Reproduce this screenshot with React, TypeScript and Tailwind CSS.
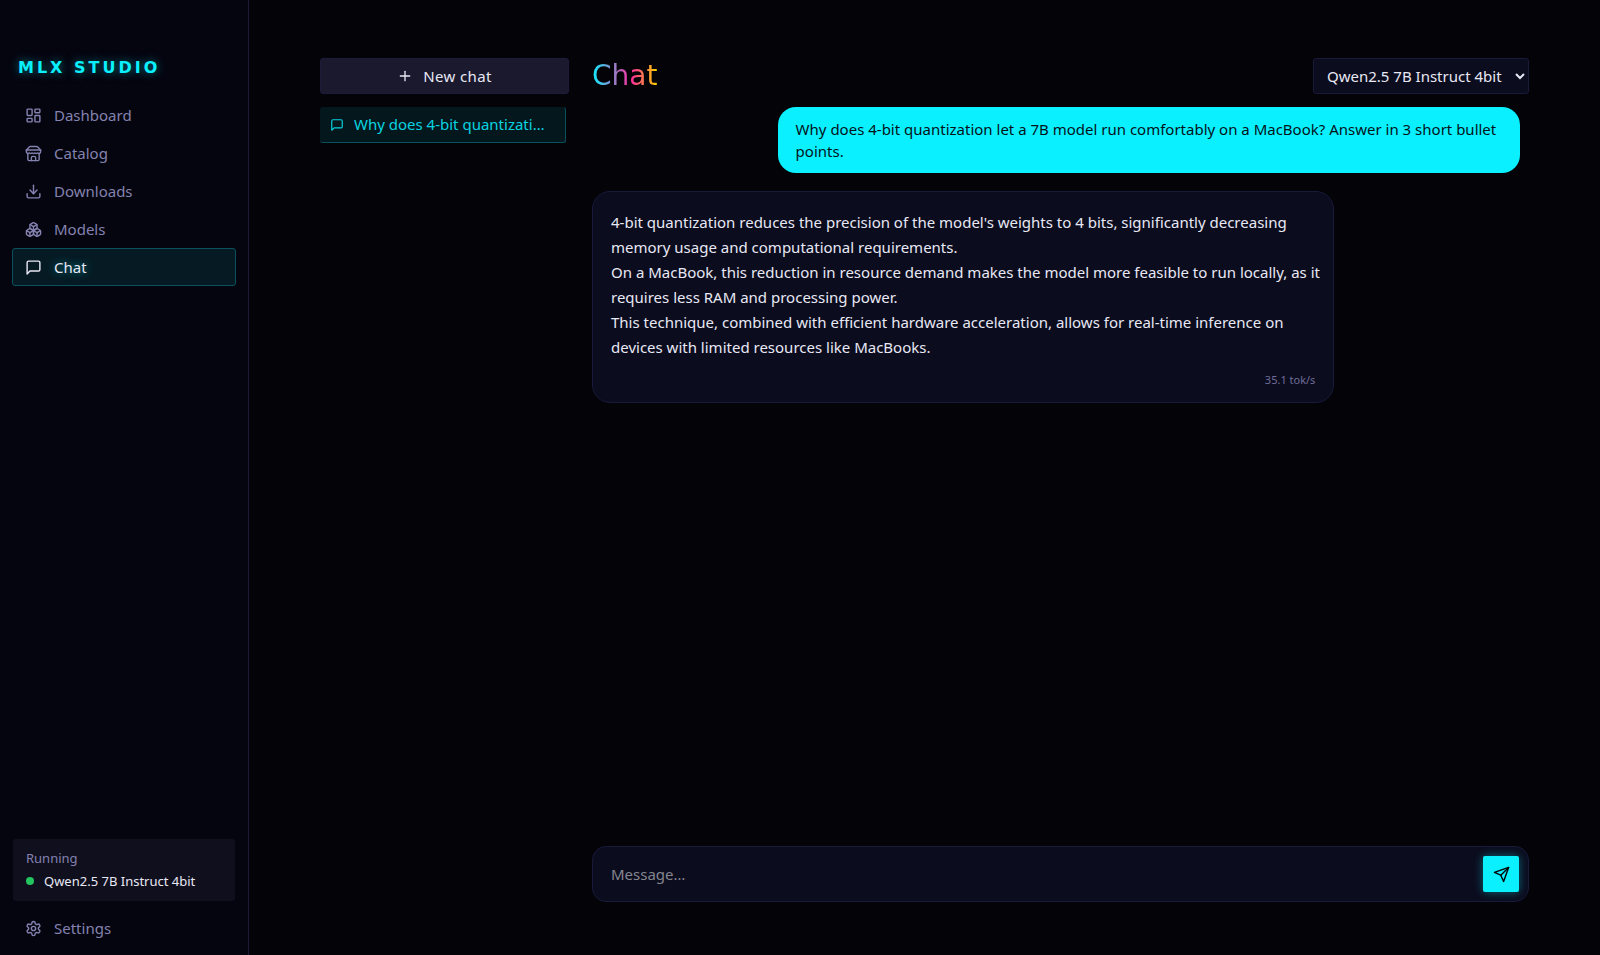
import { useState } from "react";
import type { ReactNode } from "react";
import { Boxes, Download, LayoutDashboard, Plus } from "lucide-react";

type IconProps = { size?: number; className?: string };
type Icon = (props: IconProps) => ReactNode;

function Glyph({ size = 17, className, children }: IconProps & { children: ReactNode }) {
  return (
    <svg
      aria-hidden="true"
      width={size}
      height={size}
      viewBox="0 0 24 24"
      fill="none"
      stroke="currentColor"
      strokeWidth={2}
      strokeLinecap="round"
      strokeLinejoin="round"
      className={className}
    >
      {children}
    </svg>
  );
}

const StoreIcon: Icon = (props) => (
  <Glyph {...props}>
    <path d="m2 7 4.41-4.41A2 2 0 0 1 7.83 2h8.34a2 2 0 0 1 1.42.59L22 7" />
    <path d="M4 12v8a2 2 0 0 0 2 2h12a2 2 0 0 0 2-2v-8" />
    <path d="M15 22v-4a2 2 0 0 0-2-2h-2a2 2 0 0 0-2 2v4" />
    <path d="M2 7h20" />
    <path d="M22 7v3a2 2 0 0 1-2 2a2.7 2.7 0 0 1-1.59-.63.7.7 0 0 0-.82 0A2.7 2.7 0 0 1 16 12a2.7 2.7 0 0 1-1.59-.63.7.7 0 0 0-.82 0A2.7 2.7 0 0 1 12 12a2.7 2.7 0 0 1-1.59-.63.7.7 0 0 0-.82 0A2.7 2.7 0 0 1 8 12a2.7 2.7 0 0 1-1.59-.63.7.7 0 0 0-.82 0A2.7 2.7 0 0 1 4 12a2 2 0 0 1-2-2V7" />
  </Glyph>
);

const MessageIcon: Icon = (props) => (
  <Glyph {...props}>
    <path d="M21 15a2 2 0 0 1-2 2H7l-4 4V5a2 2 0 0 1 2-2h14a2 2 0 0 1 2 2z" />
  </Glyph>
);

const SendIcon: Icon = (props) => (
  <Glyph {...props}>
    <path d="m22 2-7 20-4-9-9-4Z" />
    <path d="M22 2 11 13" />
  </Glyph>
);

const SettingsIcon: Icon = (props) => (
  <Glyph {...props}>
    <path d="M12.22 2h-.44a2 2 0 0 0-2 2v.18a2 2 0 0 1-1 1.73l-.43.25a2 2 0 0 1-2 0l-.15-.08a2 2 0 0 0-2.73.73l-.22.38a2 2 0 0 0 .73 2.73l.15.1a2 2 0 0 1 1 1.72v.51a2 2 0 0 1-1 1.74l-.15.09a2 2 0 0 0-.73 2.73l.22.38a2 2 0 0 0 2.73.73l.15-.08a2 2 0 0 1 2 0l.43.25a2 2 0 0 1 1 1.73V20a2 2 0 0 0 2 2h.44a2 2 0 0 0 2-2v-.18a2 2 0 0 1 1-1.73l.43-.25a2 2 0 0 1 2 0l.15.08a2 2 0 0 0 2.73-.73l.22-.39a2 2 0 0 0-.73-2.73l-.15-.08a2 2 0 0 1-1-1.74v-.5a2 2 0 0 1 1-1.74l.15-.09a2 2 0 0 0 .73-2.73l-.22-.38a2 2 0 0 0-2.73-.73l-.15.08a2 2 0 0 1-2 0l-.43-.25a2 2 0 0 1-1-1.73V4a2 2 0 0 0-2-2z" />
    <circle cx="12" cy="12" r="3" />
  </Glyph>
);

const NAV: { label: string; icon: ReactNode }[] = [
  { label: "Dashboard", icon: <LayoutDashboard size={17} /> },
  { label: "Catalog", icon: <StoreIcon /> },
  { label: "Downloads", icon: <Download size={17} /> },
  { label: "Models", icon: <Boxes size={17} /> },
  { label: "Chat", icon: <MessageIcon /> },
];

const ANSWER = [
  "4-bit quantization reduces the precision of the model's weights to 4 bits, significantly decreasing memory usage and computational requirements.",
  "On a MacBook, this reduction in resource demand makes the model more feasible to run locally, as it requires less RAM and processing power.",
  "This technique, combined with efficient hardware acceleration, allows for real-time inference on devices with limited resources like MacBooks.",
];

function NavLink({
  icon,
  active = false,
  children,
}: {
  icon: ReactNode;
  active?: boolean;
  children: ReactNode;
}) {
  return (
    <a
      href="#"
      aria-current={active ? "page" : undefined}
      className={
        active
          ? "flex h-[38px] items-center gap-3 rounded-[3px] border border-[#07525c] bg-[#061a23] px-3 text-[#e8e8f4] [text-shadow:0_0_10px_rgba(10,240,255,0.6)]"
          : "flex h-[38px] items-center gap-3 rounded-[3px] border border-transparent px-3 text-[#8482b0]"
      }
    >
      {icon}
      {children}
    </a>
  );
}

function Sidebar() {
  return (
    <aside className="flex w-[249px] shrink-0 flex-col border-r border-[#1a1a38] bg-[#05050f] px-3 pt-[58px] pb-2">
      <div className="mb-[18px] px-[6px] font-['DejaVu_Sans',sans-serif] text-base leading-5 font-bold tracking-[3px] text-[#0af0ff] [text-shadow:0_0_10px_rgba(10,240,255,0.5)]">
        MLX STUDIO
      </div>
      <nav className="flex flex-col">
        {NAV.map((item) => (
          <NavLink key={item.label} icon={item.icon} active={item.label === "Chat"}>
            {item.label}
          </NavLink>
        ))}
      </nav>
      <section className="mx-px mt-auto mb-2 rounded-[3px] bg-[#100f1e] px-[13px] py-2">
        <h2 className="text-[13px] leading-[22px] text-[#8482b0]">Running</h2>
        <p className="flex items-center gap-[10px] text-[13px] leading-6 text-[#e8e8f4]">
          <span className="size-2 rounded-full bg-[#22c55e]" />
          Qwen2.5 7B Instruct 4bit
        </p>
      </section>
      <NavLink icon={<SettingsIcon />}>Settings</NavLink>
    </aside>
  );
}

function History() {
  return (
    <section aria-label="Chats" className="flex w-[249px] shrink-0 flex-col gap-[13px]">
      <button
        type="button"
        className="flex h-9 items-center justify-center gap-[10px] rounded-[3px] border border-[#1c1b3c] bg-[#1a192e] tracking-wide text-[#e8e8f4]"
      >
        <Plus size={16} />
        New chat
      </button>
      <div className="pr-[3px]">
        <button
          type="button"
          className="flex h-9 w-full items-center gap-[10px] rounded-[3px] border-r border-b border-[#07525c] bg-[#04171d] pl-[10px] text-[#09d3e0]"
        >
          <MessageIcon size={14} />
          Why does 4-bit quantizati…
        </button>
      </div>
    </section>
  );
}

export default function App() {
  const [draft, setDraft] = useState("");
  return (
    <div className="flex min-h-screen bg-[#030308] font-['Noto_Sans',sans-serif] text-[15px] text-[#e8e8f4]">
      <Sidebar />
      <main className="flex min-w-0 flex-1 gap-[23px] px-[71px] pt-[58px] pb-[53px]">
        <History />
        <section className="flex min-w-0 flex-1 flex-col">
          <header className="flex h-9 items-center justify-between">
            <h1 className="bg-linear-to-r/srgb from-[#0af0ff] via-[#ff2a9d] via-60% to-[#ffd000] bg-clip-text font-['DejaVu_Sans',sans-serif] text-[28px] leading-9 text-transparent">
              Chat
            </h1>
            <select
              aria-label="Model"
              className="h-9 w-[216px] rounded-[3px] border border-[#181a3a] bg-[#0b0c1e] px-[9px] text-[#e8e8f4]"
            >
              <option>Qwen2.5 7B Instruct 4bit</option>
            </select>
          </header>
          <div className="mt-[13px] flex flex-1 flex-col gap-[18px] pr-[9px]">
            <p className="w-4/5 self-end rounded-[18px] bg-[#0af0ff] px-[18px] py-[11px] leading-[22px] text-[#04121a]">
              Why does 4-bit quantization let a 7B model run comfortably on a MacBook? Answer in 3 short
              bullet points.
            </p>
            <article className="w-4/5 self-start rounded-[18px] border border-[#181a3a] bg-[#0b0c1e] pt-[18px] pr-3 pb-[13px] pl-[18px]">
              {ANSWER.map((line) => (
                <p key={line} className="leading-[25px]">
                  {line}
                </p>
              ))}
              <p className="mt-[11px] pr-[6px] text-right text-[11px] leading-[18px] text-[#6f6d98]">
                35.1 tok/s
              </p>
            </article>
          </div>
          <form
            className="flex h-14 items-center rounded-[14px] border border-[#181a3a] bg-[#0b0c1e] pr-[9px] pl-[18px]"
            onSubmit={(event) => event.preventDefault()}
          >
            <input
              aria-label="Message"
              placeholder="Message…"
              value={draft}
              onChange={(event) => setDraft(event.target.value)}
              className="min-w-0 flex-1 bg-transparent outline-none placeholder:text-[#85858f]"
            />
            <button
              type="submit"
              aria-label="Send"
              className="flex size-9 items-center justify-center rounded-[2px] bg-[#0af0ff] text-[#030308] shadow-[0_0_10px_rgba(10,240,255,0.4)]"
            >
              <SendIcon />
            </button>
          </form>
        </section>
      </main>
    </div>
  );
}
